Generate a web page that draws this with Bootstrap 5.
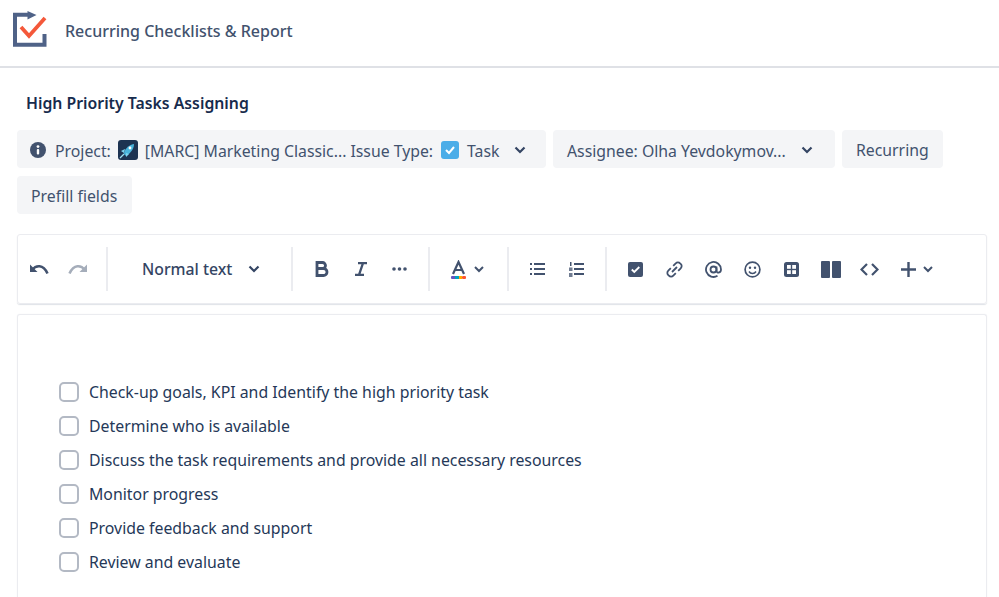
<!DOCTYPE html>
<html lang="en"><head><meta charset="utf-8"><title>Recurring Checklists</title>
<link href="https://cdn.jsdelivr.net/npm/bootstrap@5.3.0/dist/css/bootstrap.min.css" rel="stylesheet">
<style>
html,body{height:100%;overflow:hidden}
body{font-family:"Noto Sans","Open Sans",sans-serif;font-size:16px;color:#253858;background:#fff}
.app-head{height:68px;border-bottom:2px solid #dfe1e6;padding-left:13px;gap:17px}
.app-name{font-size:16px;font-weight:500;color:#42526e;line-height:24px;margin-top:-5px}
.app-logo{margin-top:-10px}
.app-body{padding:0 12px 0 17px}
.task-title{font-size:15.8px;font-weight:600;color:#172b4d;line-height:24px;margin:23px 0 15px 9px}
.chips{gap:8px 7px;width:960px}
.chip{height:38px;background:#f4f5f7;border-radius:4px;padding:1px 14.5px 0 14px;color:#42526e;font-size:15.8px;line-height:38px;white-space:nowrap}
.chip svg{flex:none}
.chip-main{width:529px;padding-left:13px;padding-right:0}
.chip-user{width:282px}
.chip-main > span,.chip-user > span{padding-top:2px}
.gap-info{margin-right:9px}
.gap-pic{margin:0 7px 0 7px}
.gap-type{margin:0 8px 0 8px}
.gap-label{margin-left:4px}
.gap-caret{margin-left:15px}
.tools{height:70px;margin-top:20px;border:1px solid #ebecf0;border-radius:3px;box-shadow:0 1px 1px rgba(9,30,66,.13);padding-left:1px}
.tool{width:39px;height:30px;flex:none}
.tool-gap{width:0;height:44px;border-left:2px solid #ebecf0;flex:none;margin-left:9px}
.tool-first{margin-left:9px}
.style-pick{color:#344563;font-weight:500;font-size:15.8px;line-height:24px;white-space:nowrap;width:118px;margin:0 31px 0 34px}
.style-pick + .tool-gap{margin-left:0}
.tool-color{gap:8px;margin:0 14px 0 21px}
.tool-plus{gap:7px;margin-left:12px}
.editor{height:300px;margin-top:10px;border:1px solid #ebecf0;border-bottom:0;border-radius:3px;padding:60px 0 0 41px;box-shadow:0 0 1px rgba(9,30,66,.1)}
.check-row{height:34px;gap:10px;color:#253858;font-size:15.85px}
.check-row > span:last-child{padding-top:2px}
.tick{width:20px;height:20px;border:2px solid #b3b9c4;border-radius:5px;flex:none;background:#fff}
</style></head>
<body>
<header class="app-head d-flex align-items-center">
<svg class="app-logo" width="35" height="37" viewBox="0 0 35 37"><path d="M17 4.700H2v30h29.500V24" fill="none" stroke="#4f6287" stroke-width="4"/><path d="M14.500 1l9 4-9 4.500z" fill="#4f6287"/><path d="M8 17l8 9 16-18" fill="none" stroke="#f4583a" stroke-width="3.800"/></svg>
<div class="app-name">Recurring Checklists &amp; Report</div>
</header>
<main class="app-body">
<div class="task-title">High Priority Tasks Assigning</div>
<div class="chips d-flex flex-wrap">
<div class="chip chip-main d-flex align-items-center">
<svg width="16" height="16" viewBox="0 0 16 16" class="gap-info"><circle cx="8" cy="8" r="8" fill="#42526e"/><rect x="6.800" y="7" width="2.400" height="5.500" rx="1" fill="#fff"/><circle cx="8" cy="4.600" r="1.400" fill="#fff"/></svg>
<span>Project:</span>
<svg width="20" height="20" viewBox="0 0 20 20" class="gap-pic"><rect width="20" height="20" rx="3" fill="#1d3352"/><path d="M6 14c0-4 4-9 10-10 0 6-5 10-8 12z" fill="#49b4dc"/><path d="M3 11l4-2-1 4zM8 17l3-3-3-1z" fill="#7fd3ee"/><path d="M2 18l4-4" stroke="#9fe0f2" stroke-width="1.200"/><circle cx="12" cy="8" r="1.400" fill="#fff"/></svg>
<span>[MARC] Marketing Classic...</span><span class="gap-label">Issue Type:</span>
<svg width="18" height="18" viewBox="0 0 18 18" class="gap-type"><rect width="18" height="18" rx="3" fill="#4bade8"/><path d="M5 9l3 3 5-6" fill="none" stroke="#fff" stroke-width="2"/></svg>
<span>Task</span>
<svg width="12" height="8" viewBox="0 0 12 8" class="gap-caret"><path d="M1.500 1.500L6 6l4.500-4.500" fill="none" stroke="#344563" stroke-width="2.200"/></svg>
</div>
<div class="chip chip-user d-flex align-items-center"><span>Assignee: Olha Yevdokymov...</span><svg width="12" height="8" viewBox="0 0 12 8" class="gap-caret"><path d="M1.500 1.500L6 6l4.500-4.500" fill="none" stroke="#344563" stroke-width="2.200"/></svg></div>
<div class="chip">Recurring</div>
<div class="chip">Prefill fields</div>
</div>
<div class="tools d-flex align-items-center">
<div class="tool d-flex align-items-center justify-content-center"><svg width="20" height="12" viewBox="0 0 20 12"><path d="M3 7C7 2 14 1 18.500 10.500" fill="none" stroke="#42526e" stroke-width="2.600"/><path d="M1 1.500v7.500h7.500z" fill="#42526e"/></svg></div>
<div class="tool d-flex align-items-center justify-content-center"><svg width="20" height="12" viewBox="0 0 20 12"><path d="M17 7C13 2 6 1 1.500 10.500" fill="none" stroke="#a5adba" stroke-width="2.600"/><path d="M19 1.500v7.500h-7.500z" fill="#a5adba"/></svg></div>
<div class="tool-gap"></div>
<div class="style-pick d-flex align-items-center justify-content-between"><span>Normal text</span><svg width="12" height="8" viewBox="0 0 12 8"><path d="M1.500 1.500L6 6l4.500-4.500" fill="none" stroke="#344563" stroke-width="2.200"/></svg></div>
<div class="tool-gap"></div>
<div class="tool tool-first d-flex align-items-center justify-content-center"><svg width="14" height="16" viewBox="0 0 14 16"><path d="M2 1.500h5.500a3 3 0 0 1 0 6H2h6.500a3.400 3.400 0 0 1 0 7H2z" fill="none" stroke="#42526e" stroke-width="2.800"/></svg></div>
<div class="tool d-flex align-items-center justify-content-center"><svg width="14" height="14" viewBox="0 0 14 14"><path d="M4 1.200h9M1 12.800h9M9 1.200L5 12.800" fill="none" stroke="#42526e" stroke-width="2.300"/></svg></div>
<div class="tool d-flex align-items-center justify-content-center"><svg width="15" height="4" viewBox="0 0 15 4"><circle cx="2" cy="2" r="1.800" fill="#42526e"/><circle cx="7.500" cy="2" r="1.800" fill="#42526e"/><circle cx="13" cy="2" r="1.800" fill="#42526e"/></svg></div>
<div class="tool-gap"></div>
<div class="tool-color d-flex align-items-center"><svg width="15" height="19" viewBox="0 0 15 19"><path d="M2 14L7.500 2 13 14M4 10h7" fill="none" stroke="#42526e" stroke-width="2.200"/><rect y="16" width="5" height="3" rx="1" fill="#6554c0"/><rect x="4" y="16" width="4" height="3" fill="#00a3bf"/><rect x="8" y="16" width="3" height="3" fill="#ffab00"/><rect x="11" y="16" width="4" height="3" rx="1" fill="#ff5630"/></svg><svg width="10" height="7" viewBox="0 0 10 7"><path d="M1 1l4 4 4-4" fill="none" stroke="#42526e" stroke-width="2"/></svg></div>
<div class="tool-gap"></div>
<div class="tool tool-first d-flex align-items-center justify-content-center"><svg width="15" height="12" viewBox="0 0 15 12"><g fill="#42526e"><rect width="2" height="2" y="0"/><rect width="2" height="2" y="5"/><rect width="2" height="2" y="10"/><rect x="4" width="11" height="2" y="0"/><rect x="4" width="11" height="2" y="5"/><rect x="4" width="11" height="2" y="10"/></g></svg></div>
<div class="tool d-flex align-items-center justify-content-center"><svg width="15" height="15" viewBox="0 0 15 15"><g fill="#42526e"><rect x="1" width="1.500" height="4"/><rect y="5.500" width="3.500" height="3.500" opacity=".75"/><rect y="11" width="3.500" height="4" opacity=".75"/><rect x="5" y="1" width="10" height="2"/><rect x="5" y="6" width="10" height="2"/><rect x="5" y="11" width="10" height="2"/></g></svg></div>
<div class="tool-gap"></div>
<div class="tool tool-first d-flex align-items-center justify-content-center"><svg width="15" height="15" viewBox="0 0 15 15"><rect width="15" height="15" rx="2" fill="#42526e"/><path d="M3.800 7.500l2.500 2.500 5-5" fill="none" stroke="#fff" stroke-width="1.800"/></svg></div>
<div class="tool d-flex align-items-center justify-content-center"><svg width="17" height="17" viewBox="0 0 17 17"><g fill="none" stroke="#42526e" stroke-width="1.800"><path d="M7.200 4.800l2.500-2.500a3 3 0 0 1 4.400 0l.6.600a3 3 0 0 1 0 4.400l-2.500 2.500"/><path d="M9.800 12.200l-2.500 2.500a3 3 0 0 1-4.400 0l-.6-.6a3 3 0 0 1 0-4.400l2.500-2.500"/><path d="M6 11l5-5"/></g></svg></div>
<div class="tool d-flex align-items-center justify-content-center"><svg width="17" height="17" viewBox="0 0 17 17"><g fill="none" stroke="#42526e" stroke-width="1.800"><circle cx="8.500" cy="8.500" r="3"/><path d="M11.500 5.500v4.300c0 2.500 4.500 2.500 4.500-1.300a7.500 7.500 0 1 0-3.500 6.300"/></g></svg></div>
<div class="tool d-flex align-items-center justify-content-center"><svg width="17" height="17" viewBox="0 0 17 17"><circle cx="8.500" cy="8.500" r="7.400" fill="none" stroke="#42526e" stroke-width="1.700"/><circle cx="6" cy="6.800" r="1.200" fill="#42526e"/><circle cx="11" cy="6.800" r="1.200" fill="#42526e"/><path d="M5 10.500c1.500 2.500 5.500 2.500 7 0" fill="none" stroke="#42526e" stroke-width="1.500"/></svg></div>
<div class="tool d-flex align-items-center justify-content-center"><svg width="15" height="15" viewBox="0 0 15 15"><rect width="15" height="15" rx="2.500" fill="#42526e"/><g fill="#fff"><rect x="3" y="3" width="3.800" height="3.800"/><rect x="8.200" y="3" width="3.800" height="3.800"/><rect x="3" y="8.200" width="3.800" height="3.800"/><rect x="8.200" y="8.200" width="3.800" height="3.800"/></g></svg></div>
<div class="tool d-flex align-items-center justify-content-center"><svg width="20" height="17" viewBox="0 0 20 17"><rect width="9" height="17" rx="1" fill="#42526e"/><rect x="11" width="9" height="17" rx="1" fill="#42526e"/></svg></div>
<div class="tool d-flex align-items-center justify-content-center"><svg width="19" height="13" viewBox="0 0 19 13"><path d="M7 1L1.500 6.500 7 12M12 1l5.500 5.500L12 12" fill="none" stroke="#42526e" stroke-width="2.200"/></svg></div>
<div class="tool-plus d-flex align-items-center"><svg width="15" height="15" viewBox="0 0 15 15"><path d="M7.500 0v15M0 7.500h15" stroke="#42526e" stroke-width="2.400"/></svg><svg width="10" height="7" viewBox="0 0 10 7"><path d="M1 1l4 4 4-4" fill="none" stroke="#42526e" stroke-width="2"/></svg></div>
</div>
<div class="editor">
<div class="check-row d-flex align-items-center"><span class="tick"></span><span>Check-up goals, KPI and Identify the high priority task</span></div>
<div class="check-row d-flex align-items-center"><span class="tick"></span><span>Determine who is available</span></div>
<div class="check-row d-flex align-items-center"><span class="tick"></span><span>Discuss the task requirements and provide all necessary resources</span></div>
<div class="check-row d-flex align-items-center"><span class="tick"></span><span>Monitor progress</span></div>
<div class="check-row d-flex align-items-center"><span class="tick"></span><span>Provide feedback and support</span></div>
<div class="check-row d-flex align-items-center"><span class="tick"></span><span>Review and evaluate</span></div>
</div>
</main>
<script src="https://cdn.jsdelivr.net/npm/bootstrap@5.3.0/dist/js/bootstrap.bundle.min.js"></script>
</body></html>
